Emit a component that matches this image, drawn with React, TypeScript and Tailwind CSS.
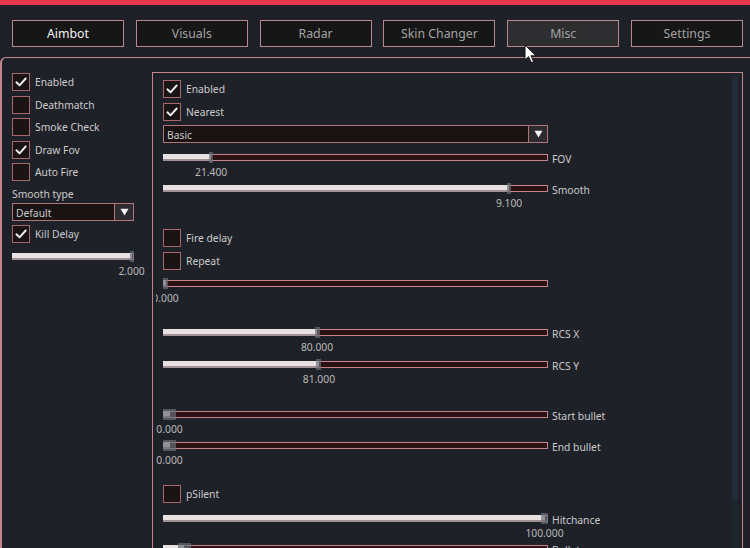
import React from "react";

const tabs = ["Aimbot", "Visuals", "Radar", "Skin Changer", "Misc", "Settings"];

function CheckBox({ checked, label }: { checked?: boolean; label: string }) {
  return (
    <div className="flex items-center h-[18px]">
      <div className="w-[18px] h-[18px] border border-[#a9686e] bg-[#1a1415] flex items-center justify-center">
        {checked && (
          <svg width="14" height="14" viewBox="0 0 14 14">
            <path d="M2.4 7.3 L5.5 10.3 L11.7 3.5" fill="none" stroke="#f2f2f2" strokeWidth="1.9" strokeLinecap="round" strokeLinejoin="round" />
          </svg>
        )}
      </div>
      <span className="ml-[5px] pt-[2px] text-[10.3px] text-[#cbcbcb] whitespace-nowrap">{label}</span>
    </div>
  );
}

function Dropdown({ text, className }: { text: string; className: string }) {
  return (
    <div className={`flex h-[18px] border border-[#b0747a] bg-[#1a1314] ${className}`}>
      <span className="flex-1 pl-[3px] pt-[1px] text-[10.3px] leading-[16px] text-[#cbcbcb]">{text}</span>
      <div className="w-[19px] border-l border-[#b0747a] bg-[#2c2c30] flex items-center justify-center">
        <svg width="9" height="8" viewBox="0 0 9 8">
          <path d="M0.5 0.8 H8.5 L4.5 7.4 Z" fill="#f4f4f4" />
        </svg>
      </div>
    </div>
  );
}

interface SliderProps {
  w: number;
  pct: number;
  hw?: number;
  label?: string;
  value: string;
  className?: string;
  widthClass: string;
}

function Slider({ w, pct, hw = 5, label, value, className = "", widthClass }: SliderProps) {
  const c = Math.min(Math.max(pct * w, hw / 2), w - hw / 2);
  return (
    <div className={className}>
      <div className={`relative h-[7px] ${widthClass}`}>
        <div className="absolute inset-0 border border-[#c4868c] bg-[#2c1215]" />
        <div className="absolute left-0 top-0 bottom-0 bg-[#e8e1e2] border-b-2 border-[#a09294]" style={{ width: c }} />
        <div className="absolute top-[-2px] h-[11px] bg-[#6a7178]/70" style={{ left: c - hw / 2, width: hw }} />
        {label && (
          <span className="absolute left-full ml-[4px] top-1/2 -translate-y-[40%] whitespace-nowrap text-[10.3px] text-[#cbcbcb]">
            {label}
          </span>
        )}
      </div>
      <div className="relative h-[13px] mt-[5px]">
        <span className="absolute top-0 -translate-x-1/2 text-[10.3px] leading-[13px] text-[#b9b9b9] whitespace-nowrap" style={{ left: c }}>
          {value}
        </span>
      </div>
    </div>
  );
}

export default function App() {
  return (
    <div className="relative w-[750px] h-[548px] overflow-hidden bg-[#1f2128] font-['Noto_Sans','DejaVu_Sans',sans-serif]">
      {/* title bar */}
      <div className="h-[5px] bg-[#e6364c]" />

      {/* tabs */}
      <div className="flex gap-[11.8px] pl-[12px] pt-[15px]">
        {tabs.map((t) => (
          <div
            key={t}
            className={`w-[112px] h-[27px] pt-[2px] flex items-center justify-center border border-[#b9878c] text-[12.3px] ${
              t === "Misc" ? "bg-[#2e2e31]" : "bg-[#161617]"
            } ${t === "Aimbot" ? "text-[#f2f2f2]" : "text-[#a3a3a3]"}`}
          >
            {t}
          </div>
        ))}
      </div>

      {/* content */}
      <div className="mt-[10px] h-[500px] border-l-2 border-t border-[#c4868c] rounded-tl-[6px] flex pt-[14px]">
        {/* left column */}
        <div className="w-[150px] pl-[10px] pt-[1px] flex flex-col">
          <div className="flex flex-col gap-[4.5px]">
            <CheckBox checked label="Enabled" />
            <CheckBox label="Deathmatch" />
            <CheckBox label="Smoke Check" />
            <CheckBox checked label="Draw Fov" />
            <CheckBox label="Auto Fire" />
          </div>
          <div className="mt-[4px] pt-[1px] h-[16px] leading-[16px] text-[10.3px] text-[#cbcbcb]">Smooth type</div>
          <Dropdown text="Default" className="mt-[2px] w-[122px]" />
          <div className="mt-[4px]">
            <CheckBox checked label="Kill Delay" />
          </div>
          <Slider className="mt-[10px]" widthClass="w-[122px]" w={122} pct={0.98} hw={4} value="2.000" />
        </div>

        {/* right panel */}
        <div className="relative flex-1 mr-[7px] border-l border-t border-r border-[#c4868c]">
          <div className="absolute right-[4px] top-[3px] w-[6px] h-[424px] bg-[#22303a]/80" />
          <div className="absolute right-[4px] top-[427px] w-[6px] bottom-0 bg-[#1c252b]" />
          <div className="ml-[3px] h-full overflow-hidden pl-[7px] pt-[7px]">
            <CheckBox checked label="Enabled" />
            <div className="mt-[5px]">
              <CheckBox checked label="Nearest" />
            </div>
            <Dropdown text="Basic" className="mt-[4px] w-[385px]" />
            <Slider className="mt-[11px]" widthClass="w-[385px]" w={385} pct={0.125} hw={4} label="FOV" value="21.400" />
            <Slider className="mt-[6px]" widthClass="w-[385px]" w={385} pct={0.899} hw={4} label="Smooth" value="9.100" />
            <div className="mt-[19px]">
              <CheckBox label="Fire delay" />
            </div>
            <div className="mt-[5px]">
              <CheckBox label="Repeat" />
            </div>
            <Slider className="mt-[10px]" widthClass="w-[385px]" w={385} pct={0} hw={5} value="0.000" />
            <Slider className="mt-[24px]" widthClass="w-[385px]" w={385} pct={0.4} hw={5} label="RCS X" value="80.000" />
            <Slider className="mt-[7px]" widthClass="w-[385px]" w={385} pct={0.405} hw={5} label="RCS Y" value="81.000" />
            <Slider className="mt-[25px]" widthClass="w-[385px]" w={385} pct={0} hw={13} label="Start bullet" value="0.000" />
            <Slider className="mt-[6px]" widthClass="w-[385px]" w={385} pct={0} hw={13} label="End bullet" value="0.000" />
            <div className="mt-[18px]">
              <CheckBox label="pSilent" />
            </div>
            <Slider className="mt-[12px]" widthClass="w-[385px]" w={385} pct={1} hw={7} label="Hitchance" value="100.000" />
            <Slider className="mt-[5px]" widthClass="w-[385px]" w={385} pct={0.055} hw={13} label="Bullets" value="" />
          </div>
        </div>
      </div>

      {/* mouse cursor */}
      <svg className="absolute left-[524px] top-[44px]" width="13" height="20" viewBox="0 0 13 20">
        <path d="M1 1 L1 16 L4.6 12.6 L7.2 18.6 L9.6 17.6 L7 11.8 L12 11.8 Z" fill="#ffffff" stroke="#111" strokeWidth="1" strokeLinejoin="round" />
      </svg>
    </div>
  );
}
